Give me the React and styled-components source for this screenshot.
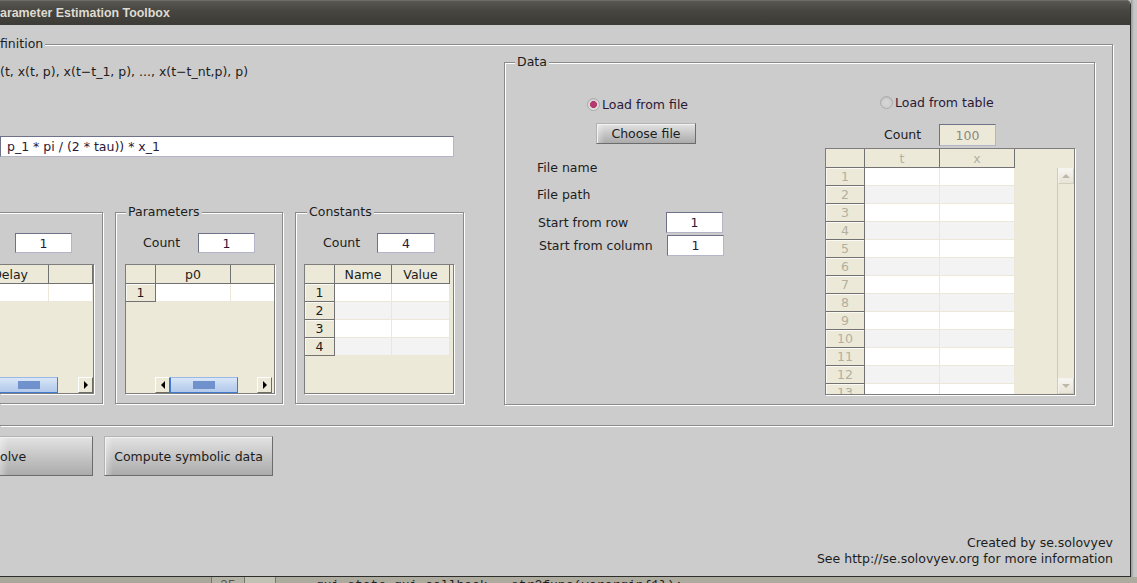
import React from 'react';
import styled, { createGlobalStyle, css } from 'styled-components';

const GlobalStyle = createGlobalStyle`
  html, body { margin: 0; padding: 0; }
  body {
    background: #c4c4c4;
    overflow: hidden;
    font-family: "DejaVu Sans", sans-serif;
    font-size: 12.5px;
    color: #1c1c1c;
  }
  * { box-sizing: border-box; }
`;

const Desktop = styled.div`
  width: 1137px;
  height: 583px;
  overflow: hidden;
  display: grid;
  grid-template-columns: 1131px 6px;
  grid-template-rows: 577px 6px;
`;

const Window = styled.div`
  display: flex;
  flex-direction: column;
  background: #cccccc;
  border-right: 1px solid #2e2e2c;
  border-bottom: 1px solid #2e2e2c;
  border-top-right-radius: 5px;
  overflow: hidden;
`;

const SideShade = styled.div`
  background: linear-gradient(90deg, #9a9a9a, #c6c6c6 3px);
`;

const TitleBar = styled.div`
  height: 25px;
  flex: none;
  display: flex;
  align-items: center;
  background: linear-gradient(#5b5954, #46453f 45%, #3c3b37);
  box-shadow: inset 0 1px 0 #6e6c67;
  color: #dfdbd2;
  font: bold 12.4px "Liberation Sans", sans-serif;
`;

const Body = styled.div`
  flex: 1;
  display: flex;
  flex-direction: column;
  padding: 19px 17px 9px 0;
`;

const Group = styled.div`
  position: relative;
  flex: none;
  border: 1px solid #8a8a8a;
  box-shadow: inset 1px 1px 0 #fff, 1px 1px 0 #fff;
  ${p => p.$clip && css`
    border-left: none;
    box-shadow: inset 0 1px 0 #fff, 1px 1px 0 #fff;
  `}
`;

const Legend = styled.span`
  position: absolute;
  top: -9px;
  left: ${p => p.$left}px;
  padding: 0 2px;
  background: #cccccc;
  line-height: 16px;
  white-space: nowrap;
`;

const DefinitionGroup = styled(Group)`
  width: 1113px;
  display: flex;
  padding: 17px 17px 20px 0;
`;

const LeftCol = styled.div`
  width: 504px;
  flex: none;
  display: flex;
  flex-direction: column;
`;

const Formula = styled.div`
  margin-top: 2px;
  line-height: 16px;
  white-space: nowrap;
`;

const TextField = styled.div`
  width: ${p => p.$w}px;
  height: ${p => p.$h || 21}px;
  flex: none;
  display: flex;
  align-items: center;
  justify-content: ${p => (p.$left ? 'flex-start' : 'center')};
  padding-left: ${p => (p.$left ? 6 : 0)}px;
  background: ${p => (p.$disabled ? '#ece9d8' : '#fff')};
  color: ${p => (p.$disabled ? '#8d8a7c' : '#2a1836')};
  border: 1px solid;
  border-color: #6f7189 #b4b6c8 #b4b6c8 #6f7189;
  white-space: nowrap;
  overflow: hidden;
`;

const PanelRow = styled.div`
  display: flex;
  gap: 12px;
  margin-top: 55px;
`;

const Panel = styled(Group)`
  width: ${p => p.$w}px;
  height: 192px;
  display: flex;
  flex-direction: column;
  padding: 20px 0 9px ${p => p.$pad}px;
`;

const CountRow = styled.div`
  display: grid;
  grid-template-columns: ${p => p.$label}px auto;
  align-items: center;
  height: 20px;
  margin-left: ${p => p.$indent}px;
  margin-bottom: ${p => p.$after}px;
`;

const Label = styled.span`
  line-height: 16px;
  white-space: nowrap;
`;

/* ---------- tables ---------- */

const TableBox = styled.div`
  width: ${p => p.$w}px;
  height: ${p => p.$h}px;
  flex: none;
  display: flex;
  flex-direction: column;
  background: #ece9d8;
  border: 1px solid #7d7d7d;
  box-shadow: 1px 1px 0 #fff;
  overflow: hidden;
  ${p => p.$clip && css`border-left: none;`}
`;

const HeadRow = styled.div`
  display: flex;
  height: 19px;
  flex: none;
`;

const HeadCell = styled.div`
  width: ${p => p.$w}px;
  flex: none;
  display: flex;
  align-items: center;
  justify-content: ${p => (p.$right ? 'flex-end' : 'center')};
  padding-right: ${p => (p.$right ? 20 : 0)}px;
  border-right: 1px solid #727272;
  border-bottom: 1px solid #727272;
  color: ${p => (p.$disabled ? '#b3b09f' : '#1c1c1c')};
  white-space: nowrap;
  overflow: hidden;
`;

const BodyArea = styled.div`
  flex: 1;
  display: flex;
  overflow: hidden;
`;

const Rows = styled.div`
  display: flex;
  flex-direction: column;
`;

const Row = styled.div`
  display: flex;
  height: 18px;
  flex: none;
`;

const RowHead = styled.div`
  width: ${p => p.$w}px;
  flex: none;
  display: flex;
  align-items: center;
  justify-content: center;
  background: #ece9d8;
  border-right: 1px solid #727272;
  border-bottom: 1px solid #727272;
  box-shadow: inset 1px 1px 0 #faf9f3;
  color: ${p => (p.$disabled ? '#b3b09f' : '#1c1c1c')};
`;

const Cell = styled.div`
  width: ${p => p.$w}px;
  flex: none;
  background: ${p => (p.$alt ? '#f3f3f3' : '#fff')};
  border-right: 1px solid #ebe8d9;
  border-bottom: 1px solid #ebe8d9;
`;

const Filler = styled.div`
  flex: 1;
`;

const VScroll = styled.div`
  width: 17px;
  flex: none;
  display: flex;
  flex-direction: column;
  border-left: 1px solid #cfcbbb;
`;

const HScroll = styled.div`
  height: 16px;
  flex: none;
  display: flex;
`;

const ScrollGap = styled.div`
  width: ${p => p.$w}px;
  flex: none;
`;

const Track = styled.div`
  flex: ${p => (p.$w ? 'none' : 1)};
  width: ${p => p.$w}px;
  background: #ece9d8;
`;

const ArrowBtn = styled.div`
  width: ${p => (p.$vertical ? 16 : 15)}px;
  height: 16px;
  flex: none;
  display: flex;
  align-items: center;
  justify-content: center;
  border: 1px solid;
  ${p => p.$disabled
    ? css`
      background: linear-gradient(#f6f5f0, #e7e4d6);
      border-color: #f4f3ee #d2cfbf #d2cfbf #f4f3ee;
    `
    : css`
      background: #ece9d8;
      border-color: #fff #6f6d62 #6f6d62 #fff;
    `}
  &::after {
    content: '';
    width: 0;
    height: 0;
    ${p => p.$dir === 'right' && css`border-top: 4px solid transparent; border-bottom: 4px solid transparent; border-left: 4px solid #000;`}
    ${p => p.$dir === 'left' && css`border-top: 4px solid transparent; border-bottom: 4px solid transparent; border-right: 4px solid #000;`}
    ${p => p.$dir === 'up' && css`border-left: 4px solid transparent; border-right: 4px solid transparent; border-bottom: 4px solid #bdb9a8;`}
    ${p => p.$dir === 'down' && css`border-left: 4px solid transparent; border-right: 4px solid transparent; border-top: 4px solid #bdb9a8;`}
  }
`;

const Thumb = styled.div`
  width: ${p => p.$w}px;
  flex: none;
  display: flex;
  align-items: center;
  justify-content: center;
  background: linear-gradient(#dbe7f7, #c3d6f0 50%, #b3c9ea);
  border: 1px solid #3f7bd0;
  border-top-color: #9ab8e4;
  ${p => p.$clip && css`border-left: none;`}
`;

const Grip = styled.span`
  width: 22px;
  height: 8px;
  background-image: radial-gradient(circle, #6d8fcb 0 0.7px, transparent 0.9px);
  background-size: 2px 2px;
`;

function DataTable({ w, h, clip, rowHead, cols, rows, disabled, hscroll, vscroll }) {
  return (
    <TableBox $w={w} $h={h} $clip={clip}>
      <HeadRow>
        {rowHead && <HeadCell $w={rowHead} />}
        {cols.map((c, i) => (
          <HeadCell key={i} $w={c.w} $right={c.right} $disabled={disabled}>{c.name}</HeadCell>
        ))}
      </HeadRow>
      <BodyArea>
        <Rows>
          {Array.from({ length: rows }).map((_, r) => (
            <Row key={r}>
              {rowHead && <RowHead $w={rowHead} $disabled={disabled}>{r + 1}</RowHead>}
              {cols.map((c, i) => <Cell key={i} $w={c.w} $alt={r % 2 === 1} />)}
            </Row>
          ))}
        </Rows>
        <Filler />
        {vscroll && (
          <VScroll>
            <ArrowBtn $vertical $dir="up" $disabled />
            <Track />
            <ArrowBtn $vertical $dir="down" $disabled />
          </VScroll>
        )}
      </BodyArea>
      {hscroll && (
        <HScroll>
          {hscroll.gap > 0 && <ScrollGap $w={hscroll.gap} />}
          {hscroll.left && <ArrowBtn $dir="left" />}
          <Thumb $w={hscroll.thumb} $clip={!hscroll.left}><Grip /></Thumb>
          <Track $w={hscroll.track} />
          <ArrowBtn $dir="right" />
        </HScroll>
      )}
    </TableBox>
  );
}

/* ---------- data group ---------- */

const DataGroup = styled(Group)`
  width: 591px;
  height: 343px;
  display: grid;
  grid-template-columns: 320px 250px;
  align-items: start;
`;

const FileCol = styled.div`
  display: flex;
  flex-direction: column;
  align-items: flex-start;
`;

const TableCol = styled.div`
  display: flex;
  flex-direction: column;
  align-items: flex-start;
`;

const RadioRow = styled.label`
  display: flex;
  align-items: center;
  gap: 2px;
  height: 16px;
  margin-top: ${p => p.$top}px;
  margin-left: ${p => p.$indent}px;
  color: #2a1836;
  white-space: nowrap;
`;

const RadioDot = styled.span`
  width: 13px;
  height: 13px;
  border-radius: 50%;
  border: 1px solid #ababab;
  background: ${p => (p.$on
    ? 'radial-gradient(circle, #b23a6f 0 3.2px, #dcdcdc 3.8px)'
    : 'radial-gradient(circle, #d6d6d6, #cbcbcb)')};
  box-shadow: inset 0 1px 1px rgba(0, 0, 0, 0.1);
`;

const TextLine = styled.div`
  line-height: 16px;
  margin-top: ${p => p.$top}px;
  margin-left: ${p => p.$indent}px;
  white-space: nowrap;
`;

const FieldRow = styled.div`
  display: grid;
  grid-template-columns: 128px 57px;
  align-items: center;
  margin-top: ${p => p.$top}px;
  margin-left: ${p => p.$indent}px;
`;

/* ---------- buttons / footer ---------- */

const Button = styled.button`
  width: ${p => p.$w}px;
  height: ${p => p.$h}px;
  flex: none;
  margin: ${p => p.$margin || 0};
  padding: 0;
  font: inherit;
  color: #1c1c1c;
  text-align: ${p => (p.$clip ? 'left' : 'center')};
  background: linear-gradient(90deg, rgba(255,255,255,0.35), rgba(255,255,255,0) 8px),
    linear-gradient(#e3e3e3, #c9c9c9 45%, #ababab);
  border: 1px solid;
  border-color: #b3b3b3 #6c6c6c #6c6c6c #b3b3b3;
  box-shadow: inset 1px 1px 0 #f2f2f2;
  white-space: nowrap;
  ${p => p.$clip && css`border-left: none; box-shadow: inset 0 1px 0 #f2f2f2;`}
`;

const ButtonRow = styled.div`
  display: flex;
  gap: 11px;
  margin-top: 10px;
`;

const Footer = styled.div`
  margin-top: auto;
  text-align: right;
  line-height: 16px;
  white-space: nowrap;
`;

/* ---------- editor strip behind the window ---------- */

const EditorStrip = styled.div`
  grid-column: 1 / span 2;
  display: flex;
  background: #acab9e;
  overflow: hidden;
  font: 13px "Liberation Mono", monospace;
  line-height: 18px;
  color: #1e1e1e;
`;

const EditorPane = styled.div`
  width: ${p => p.$w}px;
  flex: none;
  background: ${p => p.$bg};
  border-right: 1px solid #77766b;
  padding-left: ${p => p.$pad || 0}px;
  white-space: nowrap;
  color: #55554c;
`;

const Code = styled.div`
  padding-left: 40px;
  white-space: nowrap;
`;

export default function App() {
  return (
    <>
      <GlobalStyle />
      <Desktop>
        <Window>
          <TitleBar>arameter Estimation Toolbox</TitleBar>
          <Body>
            <DefinitionGroup $clip>
              <Legend $left={-2}>finition</Legend>
              <LeftCol>
                <Formula>(t, x(t, p), x(t−t_1, p), ..., x(t−t_nt,p), p)</Formula>
                <TextField $w={454} $left style={{ marginTop: 56 }}>
                  p_1 * pi / (2 * tau)) * x_1
                </TextField>
                <PanelRow>
                  <Panel $clip $w={103} $pad={0}>
                    <CountRow $label={0} $indent={15} $after={11}>
                      <span />
                      <TextField $w={57} $h={20}>1</TextField>
                    </CountRow>
                    <DataTable
                      w={94}
                      h={130}
                      clip
                      cols={[{ name: 'Delay', w: 49, right: true }, { name: '', w: 44 }]}
                      rows={1}
                      hscroll={{ gap: 0, left: false, thumb: 58, track: 20 }}
                    />
                  </Panel>
                  <Panel $w={168} $pad={9}>
                    <Legend $left={10}>Parameters</Legend>
                    <CountRow $label={55} $indent={18} $after={11}>
                      <Label>Count</Label>
                      <TextField $w={57} $h={20}>1</TextField>
                    </CountRow>
                    <DataTable
                      w={150}
                      h={130}
                      rowHead={30}
                      cols={[{ name: 'p0', w: 75 }, { name: '', w: 45 }]}
                      rows={1}
                      hscroll={{ gap: 29, left: true, thumb: 68, track: 19 }}
                    />
                  </Panel>
                  <Panel $w={169} $pad={8}>
                    <Legend $left={11}>Constants</Legend>
                    <CountRow $label={54} $indent={19} $after={11}>
                      <Label>Count</Label>
                      <TextField $w={58} $h={20}>4</TextField>
                    </CountRow>
                    <DataTable
                      w={150}
                      h={130}
                      rowHead={30}
                      cols={[{ name: 'Name', w: 57 }, { name: 'Value', w: 58 }]}
                      rows={4}
                    />
                  </Panel>
                </PanelRow>
              </LeftCol>
              <DataGroup>
                <Legend $left={10}>Data</Legend>
                <FileCol>
                  <RadioRow $top={33} $indent={82}>
                    <RadioDot $on />Load from file
                  </RadioRow>
                  <Button $w={100} $h={21} $margin="11px 0 0 91px">Choose file</Button>
                  <TextLine $top={16} $indent={32}>File name</TextLine>
                  <TextLine $top={11} $indent={32}>File path</TextLine>
                  <FieldRow $top={9} $indent={33}>
                    <Label>Start from row</Label>
                    <TextField $w={57}>1</TextField>
                  </FieldRow>
                  <FieldRow $top={2} $indent={34}>
                    <Label>Start from column</Label>
                    <TextField $w={57}>1</TextField>
                  </FieldRow>
                </FileCol>
                <TableCol>
                  <RadioRow $top={31} $indent={55}>
                    <RadioDot />Load from table
                  </RadioRow>
                  <CountRow $label={55} $indent={59} $after={2} style={{ marginTop: 14, height: 22 }}>
                    <Label>Count</Label>
                    <TextField $w={57} $h={22} $disabled>100</TextField>
                  </CountRow>
                  <DataTable
                    w={250}
                    h={247}
                    rowHead={39}
                    cols={[{ name: 't', w: 75 }, { name: 'x', w: 75 }]}
                    rows={13}
                    disabled
                    vscroll
                  />
                </TableCol>
              </DataGroup>
            </DefinitionGroup>
            <ButtonRow>
              <Button $clip $w={93} $h={40}>olve</Button>
              <Button $w={169} $h={40}>Compute symbolic data</Button>
            </ButtonRow>
            <Footer>
              Created by se.solovyev<br />
              See http://se.solovyev.org for more information
            </Footer>
          </Body>
        </Window>
        <SideShade />
        <EditorStrip>
          <EditorPane $w={212} $bg="#a9a89a" />
          <EditorPane $w={33} $bg="#b3b2a5" $pad={8}>35</EditorPane>
          <EditorPane $w={31} $bg="#c2c1b6" />
          <Code>qui_state.gui_callback = str2func(varargin{'{'}1{'}'});</Code>
        </EditorStrip>
      </Desktop>
    </>
  );
}
